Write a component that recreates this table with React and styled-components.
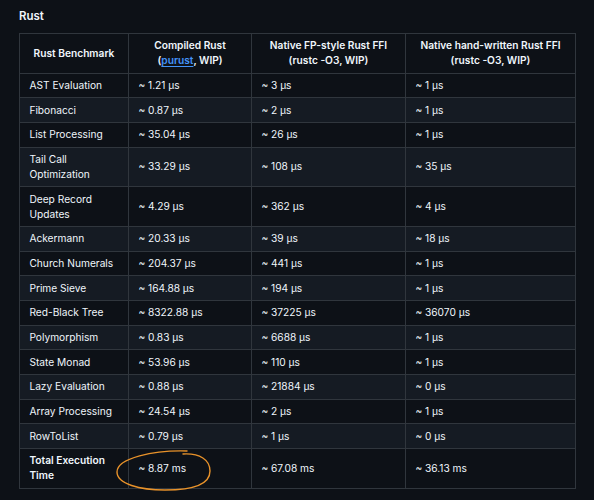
import styled, { createGlobalStyle } from "styled-components";

const rows = [
  ["AST Evaluation", "~ 1.21 µs", "~ 3 µs", "~ 1 µs"],
  ["Fibonacci", "~ 0.87 µs", "~ 2 µs", "~ 1 µs"],
  ["List Processing", "~ 35.04 µs", "~ 26 µs", "~ 1 µs"],
  ["Tail Call Optimization", "~ 33.29 µs", "~ 108 µs", "~ 35 µs"],
  ["Deep Record Updates", "~ 4.29 µs", "~ 362 µs", "~ 4 µs"],
  ["Ackermann", "~ 20.33 µs", "~ 39 µs", "~ 18 µs"],
  ["Church Numerals", "~ 204.37 µs", "~ 441 µs", "~ 1 µs"],
  ["Prime Sieve", "~ 164.88 µs", "~ 194 µs", "~ 1 µs"],
  ["Red-Black Tree", "~ 8322.88 µs", "~ 37225 µs", "~ 36070 µs"],
  ["Polymorphism", "~ 0.83 µs", "~ 6688 µs", "~ 1 µs"],
  ["State Monad", "~ 53.96 µs", "~ 110 µs", "~ 1 µs"],
  ["Lazy Evaluation", "~ 0.88 µs", "~ 21884 µs", "~ 0 µs"],
  ["Array Processing", "~ 24.54 µs", "~ 2 µs", "~ 1 µs"],
  ["RowToList", "~ 0.79 µs", "~ 1 µs", "~ 0 µs"],
];

export default function App() {
  return (
    <>
      <GlobalStyle />
      <Page>
        <Title>Rust</Title>
        <TableWrap>
          <Table>
            <colgroup>
              <col style={{ width: 109 }} />
              <col style={{ width: 123 }} />
              <col style={{ width: 154 }} />
              <col style={{ width: 170 }} />
            </colgroup>
            <thead>
              <tr>
                <Th>Rust Benchmark</Th>
                <Th>
                  Compiled Rust
                  <br />(<Link>purust</Link>, WIP)
                </Th>
                <Th>
                  Native FP-style Rust FFI
                  <br />
                  (rustc -O3, WIP)
                </Th>
                <Th>
                  Native hand-written Rust FFI
                  <br />
                  (rustc -O3, WIP)
                </Th>
              </tr>
            </thead>
            <tbody>
              {rows.map((r) => (
                <Tr key={r[0]}>
                  {r.map((c, i) => (
                    <Td key={i}>{c}</Td>
                  ))}
                </Tr>
              ))}
              <Tr>
                <Td $bold>Total Execution Time</Td>
                <Td>~ 8.87 ms</Td>
                <Td>~ 67.08 ms</Td>
                <Td>~ 36.13 ms</Td>
              </Tr>
            </tbody>
          </Table>
          <Circle width="120" height="50" viewBox="0 0 120 50">
            <path
              d="M73,5 C40,4 3,12 3,26 C3,38 26,44 51,44 C81,44 96,37 96,25 C96,14 86,7 69,8"
              fill="none"
              stroke="#e8922a"
              strokeWidth="1.4"
              strokeLinecap="round"
            />
          </Circle>
        </TableWrap>
      </Page>
    </>
  );
}

const GlobalStyle = createGlobalStyle`
  html, body {
    margin: 0;
    background: #0d1117;
  }
`;

const Page = styled.div`
  padding: 8px 19px 0;
  font-family: Inter, "Liberation Sans", sans-serif;
  color: #e6edf3;
  min-height: 500px;
  box-sizing: border-box;
`;

const Title = styled.h4`
  margin: 0 0 9px;
  font-size: 11.5px;
  line-height: 16px;
  font-weight: 600;
  color: #f0f6fc;
`;

const TableWrap = styled.div`
  position: relative;
  width: 556px;
`;

const Table = styled.table`
  border-collapse: collapse;
  table-layout: fixed;
  width: 556px;
  font-size: 10.2px;
  line-height: 15px;
`;

const Th = styled.th`
  border: 1px solid #30363d;
  padding: 4.35px 9px;
  font-weight: 600;
  text-align: center;
  color: #f0f6fc;
`;

const Tr = styled.tr`
  background: #0d1117;
  &:nth-child(2n) {
    background: #151b23;
  }
`;

const Td = styled.td`
  border: 1px solid #30363d;
  padding: 4.33px 9.4px;
  font-weight: ${(p) => (p.$bold ? 600 : 400)};
  color: #f0f6fc;
`;

const Link = styled.span`
  color: #4493f8;
  text-decoration: underline;
  text-underline-offset: 2px;
`;

const Circle = styled.svg`
  position: absolute;
  left: 95px;
  top: 413px;
  pointer-events: none;
`;
